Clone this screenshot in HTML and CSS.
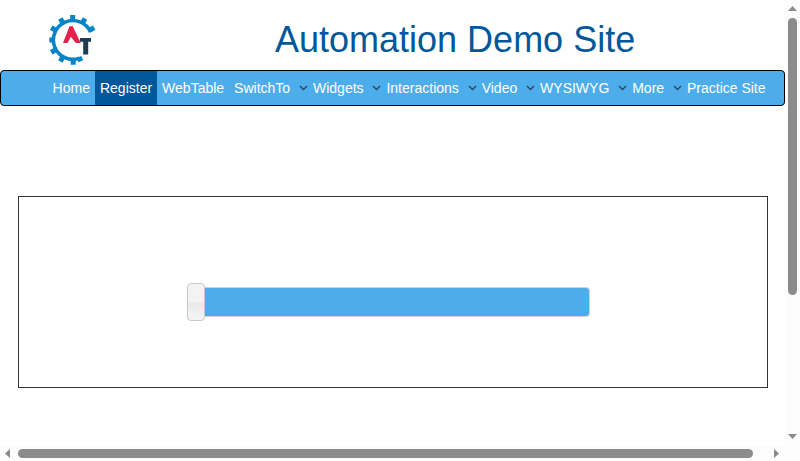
FILE: index.html
```html
<!DOCTYPE html>
<html lang="en">
<head>
<meta charset="utf-8">
<title>Slider</title>
<link rel="stylesheet" href="styles.css">
</head>
<body>
<div class="window">
<div class="page">
  <header class="header">
    <svg class="logo" viewBox="0 0 50 54" aria-hidden="true">
      <g fill="none" stroke="#0783c8">
        <path stroke-width="3.6" d="M41.5 19A19.4 19.4 0 1 0 30.6 45.1"/>
        <path stroke-width="5" d="M23.7 8V2M33.2 10.5l2.9-5M40.2 17.5l5-2.9M14.2 10.5l-2.9-5M7.2 17.5l-5-2.9M4.7 27H.3M7.2 36.5l-5 2.9M14.2 43.5l-2.9 5M24.2 46v5.8M30 44l1.8 4.2"/>
      </g>
      <path fill="#e5214d" d="M20.5 13.3h3.2L31.8 30h-5l-5-6.2-3.2 6.2H14z"/>
      <path fill="#203c52" d="M31 25h11v3.8h-2.8V41.5h-5V28.8H31z"/>
    </svg>
    <h1 class="title">Automation Demo Site</h1>
  </header>
  <nav class="nav">
    <a class="item">Home</a>
    <a class="item active">Register</a>
    <a class="item">WebTable</a>
    <a class="item menu">SwitchTo<svg class="caret" viewBox="0 0 9 6"><path d="M1 1l3.5 3.4L8 1"/></svg></a>
    <a class="item menu">Widgets<svg class="caret" viewBox="0 0 9 6"><path d="M1 1l3.5 3.4L8 1"/></svg></a>
    <a class="item menu">Interactions<svg class="caret" viewBox="0 0 9 6"><path d="M1 1l3.5 3.4L8 1"/></svg></a>
    <a class="item menu">Video<svg class="caret" viewBox="0 0 9 6"><path d="M1 1l3.5 3.4L8 1"/></svg></a>
    <a class="item menu">WYSIWYG<svg class="caret" viewBox="0 0 9 6"><path d="M1 1l3.5 3.4L8 1"/></svg></a>
    <a class="item menu">More<svg class="caret" viewBox="0 0 9 6"><path d="M1 1l3.5 3.4L8 1"/></svg></a>
    <a class="item">Practice Site</a>
  </nav>
  <main class="panel">
    <div class="slider"><span class="handle"></span></div>
  </main>
</div>
<div class="bar vertical">
  <svg class="arrow-v" viewBox="0 0 9 5"><path d="M0 5L4.5 0 9 5z"/></svg>
  <div class="thumb"></div>
  <svg class="arrow-v" viewBox="0 0 9 5"><path d="M0 0h9L4.5 5z"/></svg>
</div>
<div class="bar horizontal">
  <svg class="arrow-h" viewBox="0 0 5 9"><path d="M5 0v9L0 4.5z"/></svg>
  <div class="thumb"></div>
  <svg class="arrow-h" viewBox="0 0 5 9"><path d="M0 0l5 4.5L0 9z"/></svg>
</div>
<div class="corner"></div>
</div>
</body>
</html>
```

FILE: styles.css
```css
* { box-sizing: border-box; }
body {
  margin: 0;
  background: #fff;
  font-family: "Liberation Sans", Arial, sans-serif;
  font-size: 14px;
}
.window {
  display: grid;
  grid-template: 446px 15px / 785px 15px;
  height: 461px;
  overflow: hidden;
}
.page { overflow: hidden; }
.header {
  display: flex;
  height: 70px;
  padding-left: 49px;
}
.logo {
  width: 50px;
  height: 54px;
  margin-top: 13px;
}
.title {
  margin: 20px 0 0 176px;
  color: #00589b;
  font-size: 36px;
  font-weight: 400;
  line-height: 40px;
  white-space: nowrap;
}
.nav {
  display: flex;
  height: 36px;
  padding-left: 46.6px;
  border: 1px solid #000;
  border-radius: 4px;
  background: #4dadea;
}
.item {
  display: flex;
  align-items: center;
  padding: 0 5px;
  color: #fff;
  white-space: nowrap;
}
.active { background: #00589b; }
.menu { padding-right: 0; }
.caret {
  width: 9px;
  height: 6px;
  margin: 0 0 0 8.86px;
  fill: none;
  stroke: #24465f;
  stroke-width: 1.4;
}
.panel {
  display: flex;
  width: 750px;
  height: 192px;
  margin: 90px 0 0 18px;
  padding: 90px 0 0 168px;
  border: 1px solid #333;
}
.slider {
  display: flex;
  align-items: center;
  width: 403px;
  height: 30px;
  border: 1px solid #d3d3d3;
  border-radius: 4px;
  background: #4dadea;
}
.handle {
  flex: none;
  width: 18px;
  height: 38px;
  margin-left: -1px;
  border: 1px solid #c8c8c8;
  border-radius: 4px;
  background: linear-gradient(#f3f3f3 50%, #e9e9e9 52%, #f5f5f5);
}
.bar {
  display: flex;
  align-items: center;
  background: #fcfcfc;
}
.vertical {
  flex-direction: column;
  padding-top: 6px;
}
.thumb {
  border-radius: 5px;
  background: #8b8b8b;
}
.vertical .thumb {
  width: 9px;
  height: 277px;
  margin: 7px 0 139px;
}
.horizontal { padding-left: 5px; }
.horizontal .thumb {
  width: 735px;
  height: 9px;
  margin: 0 21px 0 8px;
}
.arrow-v, .arrow-h {
  flex: none;
  fill: #8b8b8b;
}
.arrow-v {
  width: 9px;
  height: 5px;
}
.arrow-h {
  width: 5px;
  height: 9px;
}
.corner { background: #fcfcfc; }
```
